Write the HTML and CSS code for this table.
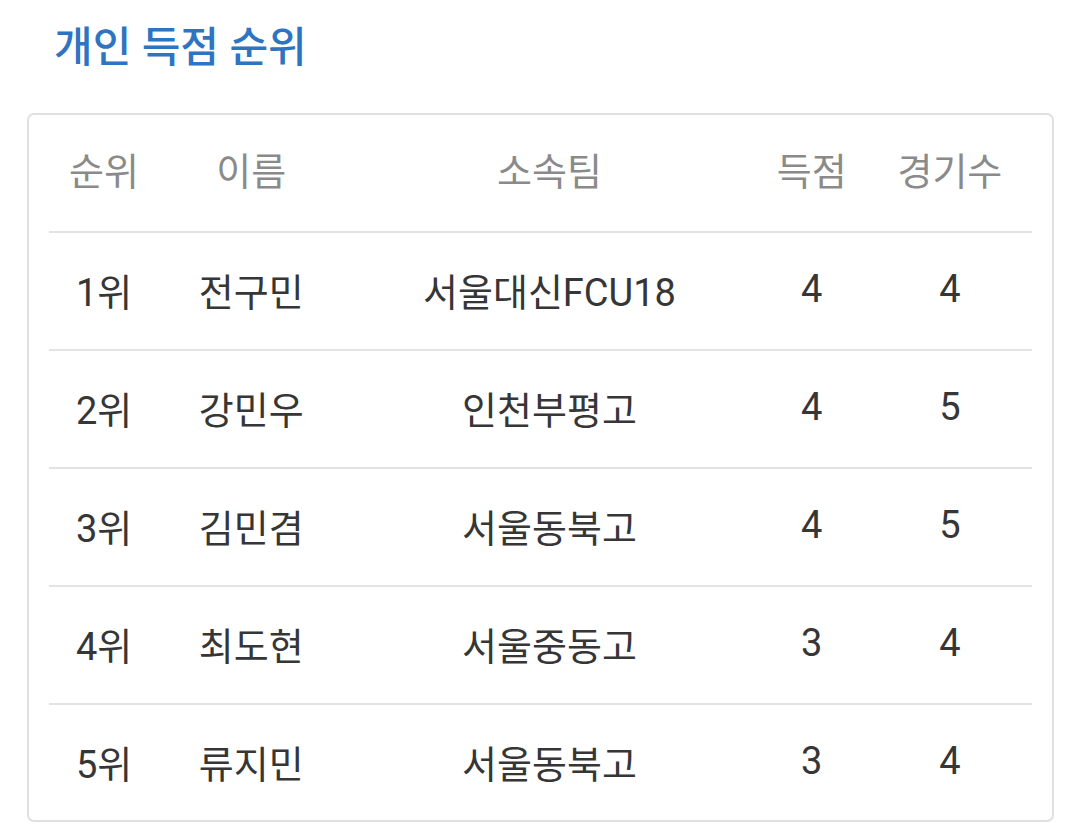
FILE: index.html
```html
<!DOCTYPE html>
<html>
<head>
    <title>개인 득점 순위</title>
    <link rel="stylesheet" href="styles.css">
</head>
<body>
    <h2 class="title">개인 득점 순위</h2>
    <div class="card">
        <table class="rank">
            <colgroup>
                <col class="c-rank">
                <col class="c-name">
                <col class="c-team">
                <col class="c-goal">
                <col class="c-game">
            </colgroup>
            <thead>
                <tr>
                    <th>순위</th>
                    <th>이름</th>
                    <th>소속팀</th>
                    <th>득점</th>
                    <th>경기수</th>
                </tr>
            </thead>
            <tbody>
                <tr><td>1위</td><td>전구민</td><td>서울대신FCU18</td><td>4</td><td>4</td></tr>
                <tr><td>2위</td><td>강민우</td><td>인천부평고</td><td>4</td><td>5</td></tr>
                <tr><td>3위</td><td>김민겸</td><td>서울동북고</td><td>4</td><td>5</td></tr>
                <tr><td>4위</td><td>최도현</td><td>서울중동고</td><td>3</td><td>4</td></tr>
                <tr><td>5위</td><td>류지민</td><td>서울동북고</td><td>3</td><td>4</td></tr>
            </tbody>
        </table>
    </div>
</body>
</html>
```

FILE: styles.css
```css
body {
    margin: 0;
    padding: 0 26px 0 27px;
    font-family: Roboto, "Noto Sans CJK KR", sans-serif;
    background: #fff;
}
.title {
    margin: 0;
    padding: 20px 0 0 27px;
    height: 113px;
    box-sizing: border-box;
    font-size: 42px;
    font-weight: 500;
    line-height: 56px;
    color: #2f74c2;
}
.card {
    border: 2px solid #e0e0e0;
    border-radius: 7px;
    padding: 0 20px;
    height: 709px;
    box-sizing: border-box;
}
.rank {
    width: 100%;
    border-collapse: collapse;
}
.c-rank { width: 110px; }
.c-name { width: 184px; }
.c-team { width: 412px; }
.c-goal { width: 112px; }
.c-game { width: 164px; }
.rank th {
    height: 106px;
    font-size: 38px;
    font-weight: 400;
    color: #8a8a8a;
    text-align: center;
    border-bottom: 2px solid #e3e3e3;
    padding: 0 0 10px;
}
.rank td {
    height: 112px;
    font-size: 38px;
    color: #363636;
    text-align: center;
    border-bottom: 2px solid #e3e3e3;
    padding: 0 0 4px;
}
.rank tbody tr:last-child td {
    border-bottom: none;
}
```
